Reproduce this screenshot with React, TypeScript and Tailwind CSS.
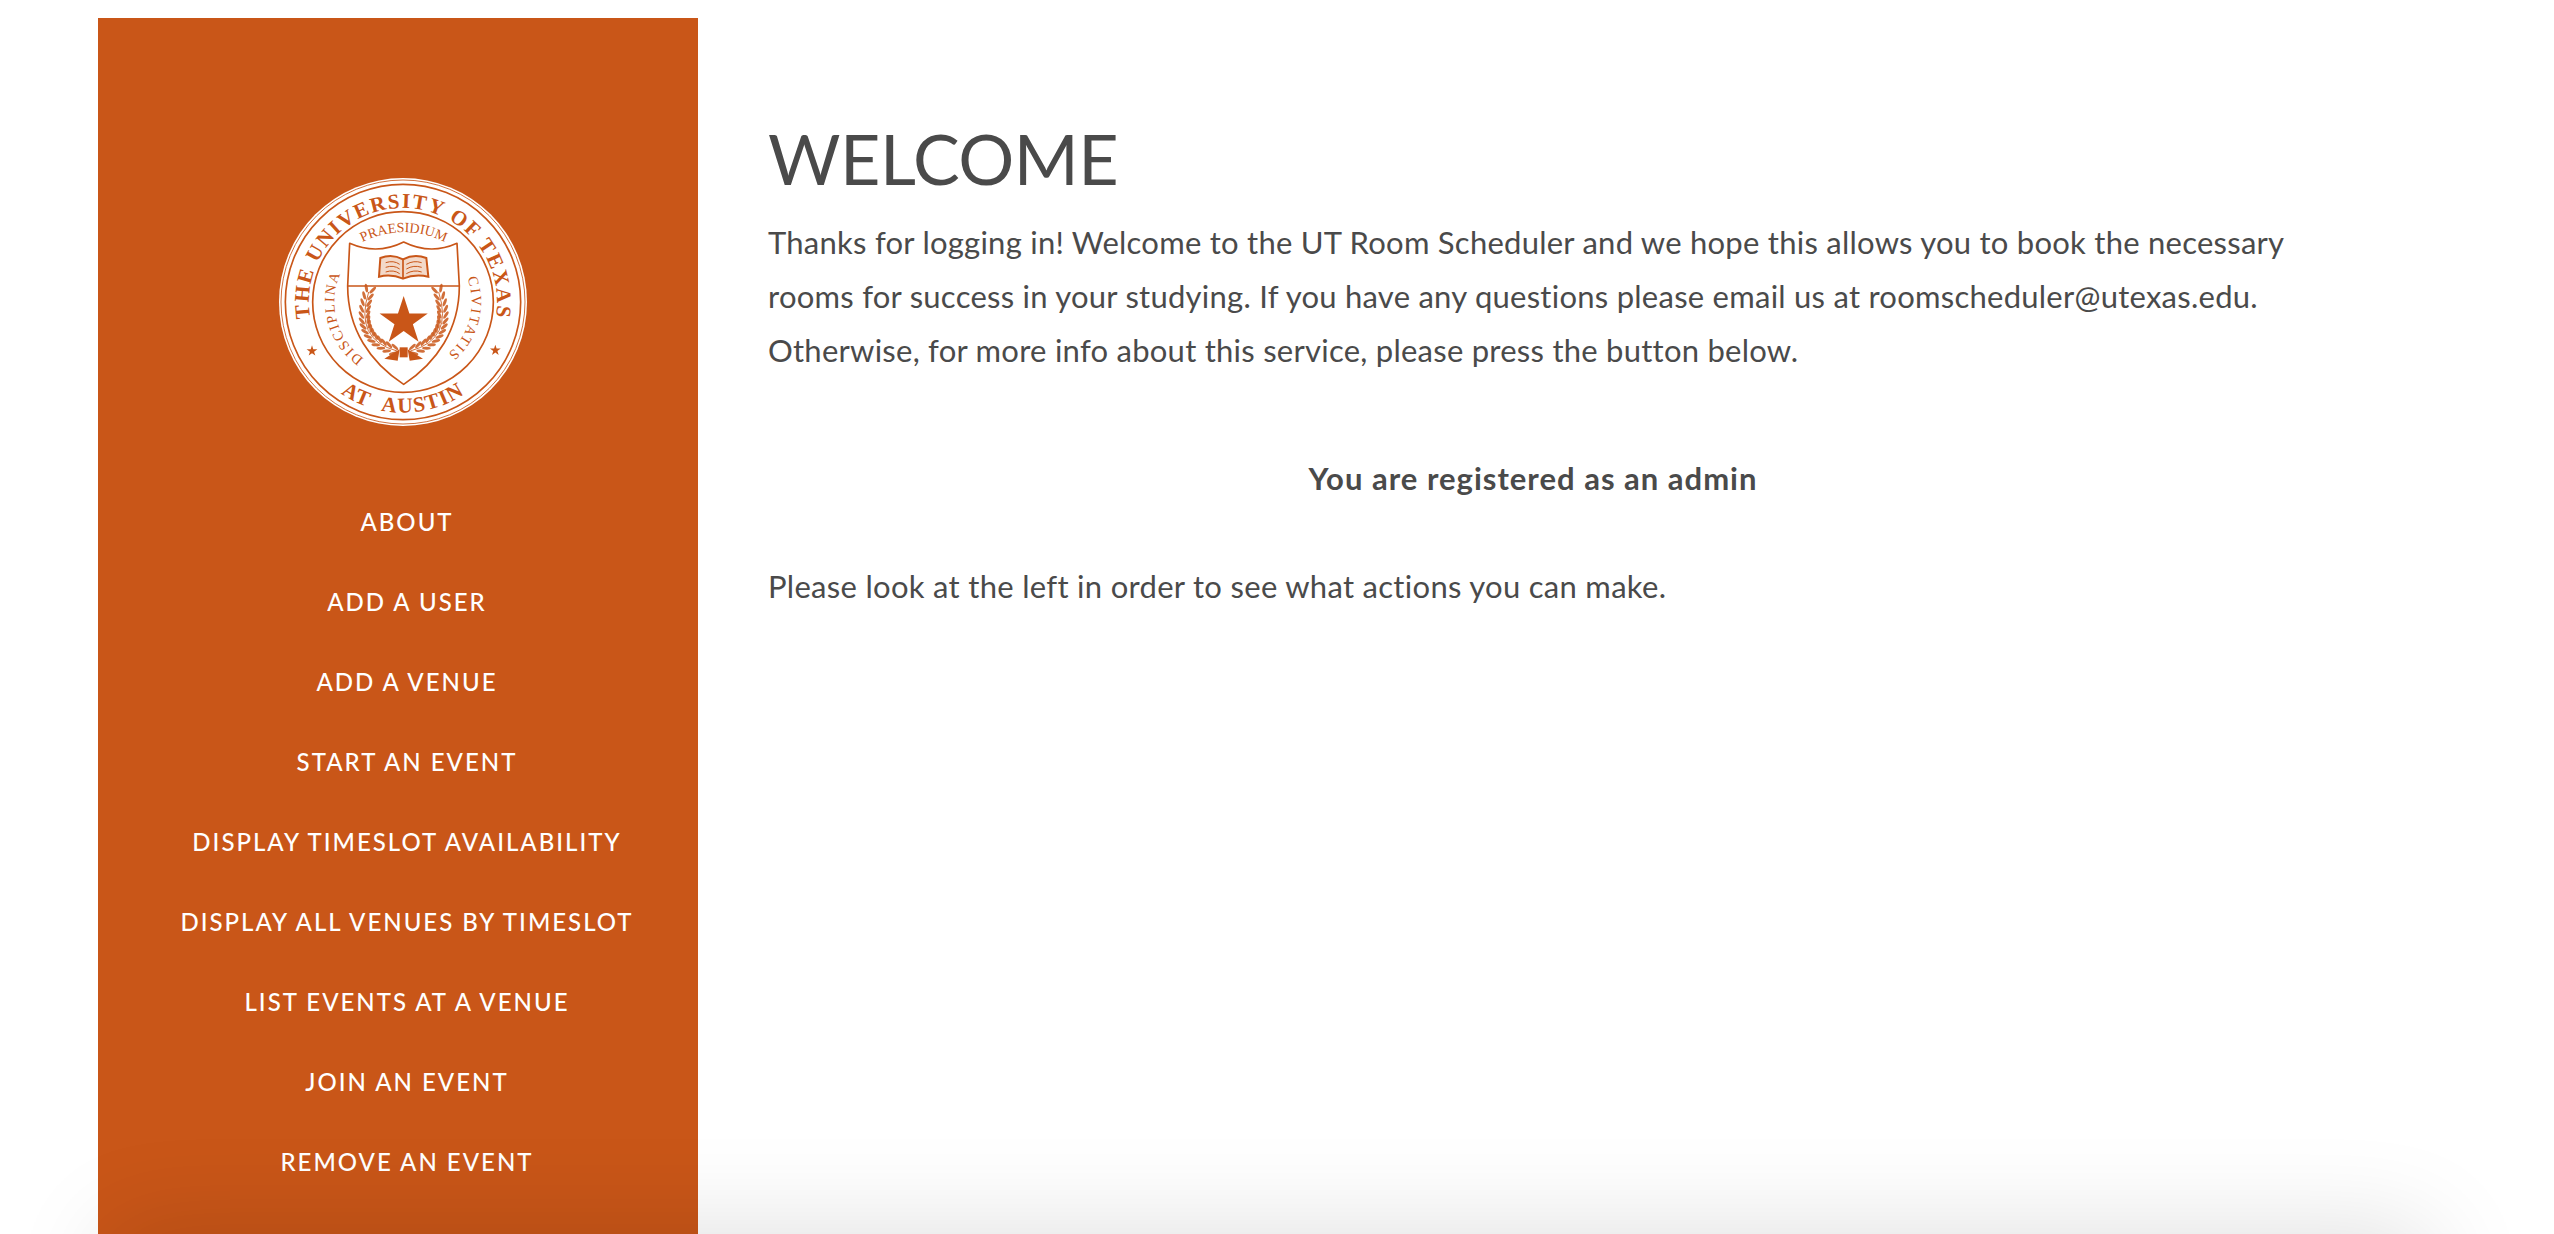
import React from "react";

const ORANGE = "#c95618";
const CX = 488;
const CY = 458;

function arc(r: number, startDeg: number, endDeg: number) {
  const p = (d: number) => {
    const a = (d * Math.PI) / 180;
    return `${(CX + r * Math.sin(a)).toFixed(1)} ${(CY - r * Math.cos(a)).toFixed(1)}`;
  };
  const sweep = endDeg > startDeg ? 1 : 0;
  const large = Math.abs(endDeg - startDeg) > 180 ? 1 : 0;
  return `M${p(startDeg)} A${r} ${r} 0 ${large} ${sweep} ${p(endDeg)}`;
}

function starPoints(cx: number, cy: number, r: number) {
  const pts: string[] = [];
  for (let i = 0; i < 10; i++) {
    const rad = i % 2 === 0 ? r : r * 0.382;
    const a = (i * 36 * Math.PI) / 180;
    pts.push(`${(cx + rad * Math.sin(a)).toFixed(1)},${(cy - rad * Math.cos(a)).toFixed(1)}`);
  }
  return pts.join(" ");
}

function Branch({ flip }: { flip?: boolean }) {
  const leaves: React.ReactNode[] = [];
  const n = 14;
  for (let i = 0; i < n; i++) {
    const t = i / (n - 1);
    const x = (1 - t) ** 2 * 470 + 2 * (1 - t) * t * 340 + t * t * 385;
    const y = (1 - t) ** 2 * 605 + 2 * (1 - t) * t * 570 + t * t * 428;
    const dx = 2 * (1 - t) * (340 - 470) + 2 * t * (385 - 340);
    const dy = 2 * (1 - t) * (570 - 605) + 2 * t * (428 - 570);
    const ang = (Math.atan2(dy, dx) * 180) / Math.PI;
    leaves.push(
      <g key={i} transform={`translate(${x.toFixed(1)} ${y.toFixed(1)}) rotate(${ang.toFixed(1)})`}>
        <ellipse cx="9" cy="-10" rx="13" ry="4.5" transform="rotate(-28 9 -10)" fill={ORANGE} opacity="0.85" />
        <ellipse cx="9" cy="10" rx="13" ry="4.5" transform="rotate(28 9 10)" fill={ORANGE} opacity="0.85" />
      </g>
    );
  }
  return (
    <g transform={flip ? "translate(980 0) scale(-1 1)" : undefined}>
      <path d="M470 605 Q340 570 385 428" fill="none" stroke={ORANGE} strokeWidth="2.5" />
      {leaves}
      <path d="M478 600 L432 628 L472 634 Z" fill={ORANGE} />
    </g>
  );
}

function Seal() {
  const serif = { fontFamily: '"Liberation Serif", serif', fill: ORANGE } as const;
  return (
    <svg viewBox="116 86 744 744" className="block h-[248px] w-[248px]">
      <defs>
        <path id="outerTop" d={arc(282, -135, 135)} />
        <path id="leftText" d={arc(206, -170, -40)} />
        <path id="rightText" d={arc(206, 40, 170)} />
        <path id="motto" d="M340 292 Q490 205 640 292" />
        <path id="atAustin" d={arc(332, 250, 110)} />
      </defs>
      <circle cx={CX} cy={CY} r="372" fill="#fff" />
      <circle cx={CX} cy={CY} r="366" fill="none" stroke={ORANGE} strokeWidth="2.5" />
      <circle cx={CX} cy={CY} r="353" fill="none" stroke={ORANGE} strokeWidth="5" />
      <circle cx={CX} cy={CY} r="271" fill="none" stroke={ORANGE} strokeWidth="5" />

      <text {...serif} fontSize="63" fontWeight="700" letterSpacing="5" textAnchor="middle">
        <textPath href="#outerTop" startOffset="50%">THE UNIVERSITY OF TEXAS</textPath>
      </text>
      <text {...serif} fontSize="64" fontWeight="700" letterSpacing="4" textAnchor="middle">
        <textPath href="#atAustin" startOffset="50%">AT&#160;&#160;AUSTIN</textPath>
      </text>
      <polygon points={starPoints(215, 605, 17)} fill={ORANGE} />
      <polygon points={starPoints(765, 603, 17)} fill={ORANGE} />

      <text {...serif} fontSize="42" letterSpacing="5" textAnchor="middle">
        <textPath href="#motto" startOffset="50%" letterSpacing="0">PRAESIDIUM</textPath>
      </text>

      <path
        d="M328 282 Q410 318 490 278 Q570 318 650 282 L657 410 C657 540 590 640 490 705 C390 640 322 540 322 410 Z"
        fill="#fff"
        stroke={ORANGE}
        strokeWidth="5"
        strokeLinejoin="round"
      />
      <line x1="322" y1="410" x2="657" y2="410" stroke={ORANGE} strokeWidth="5" />

      <text {...serif} fontSize="43" letterSpacing="5" textAnchor="middle">
        <textPath href="#leftText" startOffset="50%">DISCIPLINA</textPath>
      </text>
      <text {...serif} fontSize="43" letterSpacing="6" textAnchor="middle">
        <textPath href="#rightText" startOffset="50%">CIVITATIS</textPath>
      </text>

      <g fill="none" stroke={ORANGE}>
        <path d="M416 382 L420 326 Q455 312 488 330 Q522 312 558 326 L564 382 Q525 372 488 388 Q452 372 416 382 Z" strokeWidth="6" fill="#f3d9c9" />
        <path d="M488 330 L488 388" strokeWidth="5" />
        <path d="M436 340 Q460 332 478 345 M436 354 Q460 346 478 359 M436 368 Q460 360 478 373 M498 345 Q520 332 544 340 M498 359 Q520 346 544 354 M498 373 Q520 360 544 368" strokeWidth="3" />
      </g>

      <Branch />
      <Branch flip />
      <rect x="478" y="594" width="24" height="30" fill={ORANGE} />
      <polygon points={starPoints(490, 516, 76)} fill={ORANGE} />
    </svg>
  );
}

const NAV = [
  "About",
  "Add a user",
  "Add a venue",
  "Start an event",
  "Display timeslot availability",
  "Display all venues by timeslot",
  "List events at a venue",
  "Join an event",
  "Remove an event",
];

export default function App() {
  return (
    <div className="relative flex h-screen w-full overflow-hidden bg-white pl-[98px] pt-[18px] font-['Lato',sans-serif]">
      <aside className="flex w-[600px] shrink-0 flex-col items-center bg-[#c95618] pl-[18px]">
        <div className="mt-[160px] mr-[9px]">
          <Seal />
        </div>
        <nav className="mt-[76px] flex flex-col items-center gap-[40px]">
          {NAV.map((n) => (
            <a key={n} className="block h-[40px] whitespace-nowrap text-[24px] font-medium uppercase leading-[40px] tracking-[2px] text-white">
              {n}
            </a>
          ))}
        </nav>
      </aside>
      <main className="w-[1600px] pl-[70px] text-[#4a4a4a]">
        <h1 className="mt-[90px] text-[70px] font-normal leading-[100px] tracking-[-0.5px]">WELCOME</h1>
        <p className="mt-[7px] text-[31px] leading-[54px] tracking-[0.25px]">
          Thanks for logging in! Welcome to the UT Room Scheduler and we hope this allows you to book the necessary
          <br />
          rooms for success in your studying. If you have any questions please email us at roomscheduler@utexas.edu.
          <br />
          Otherwise, for more info about this service, please press the button below.
        </p>
        <p className="mt-[74px] text-center text-[31px] font-bold leading-[54px] tracking-[1px]">You are registered as an admin</p>
        <p className="mt-[54px] text-[31px] leading-[54px] tracking-[0.3px]">Please look at the left in order to see what actions you can make.</p>
      </main>
      <div className="pointer-events-none absolute left-[110px] top-[1300px] h-[200px] w-[2320px] shadow-[0_-70px_100px_rgba(0,0,0,0.13)]" />
    </div>
  );
}
